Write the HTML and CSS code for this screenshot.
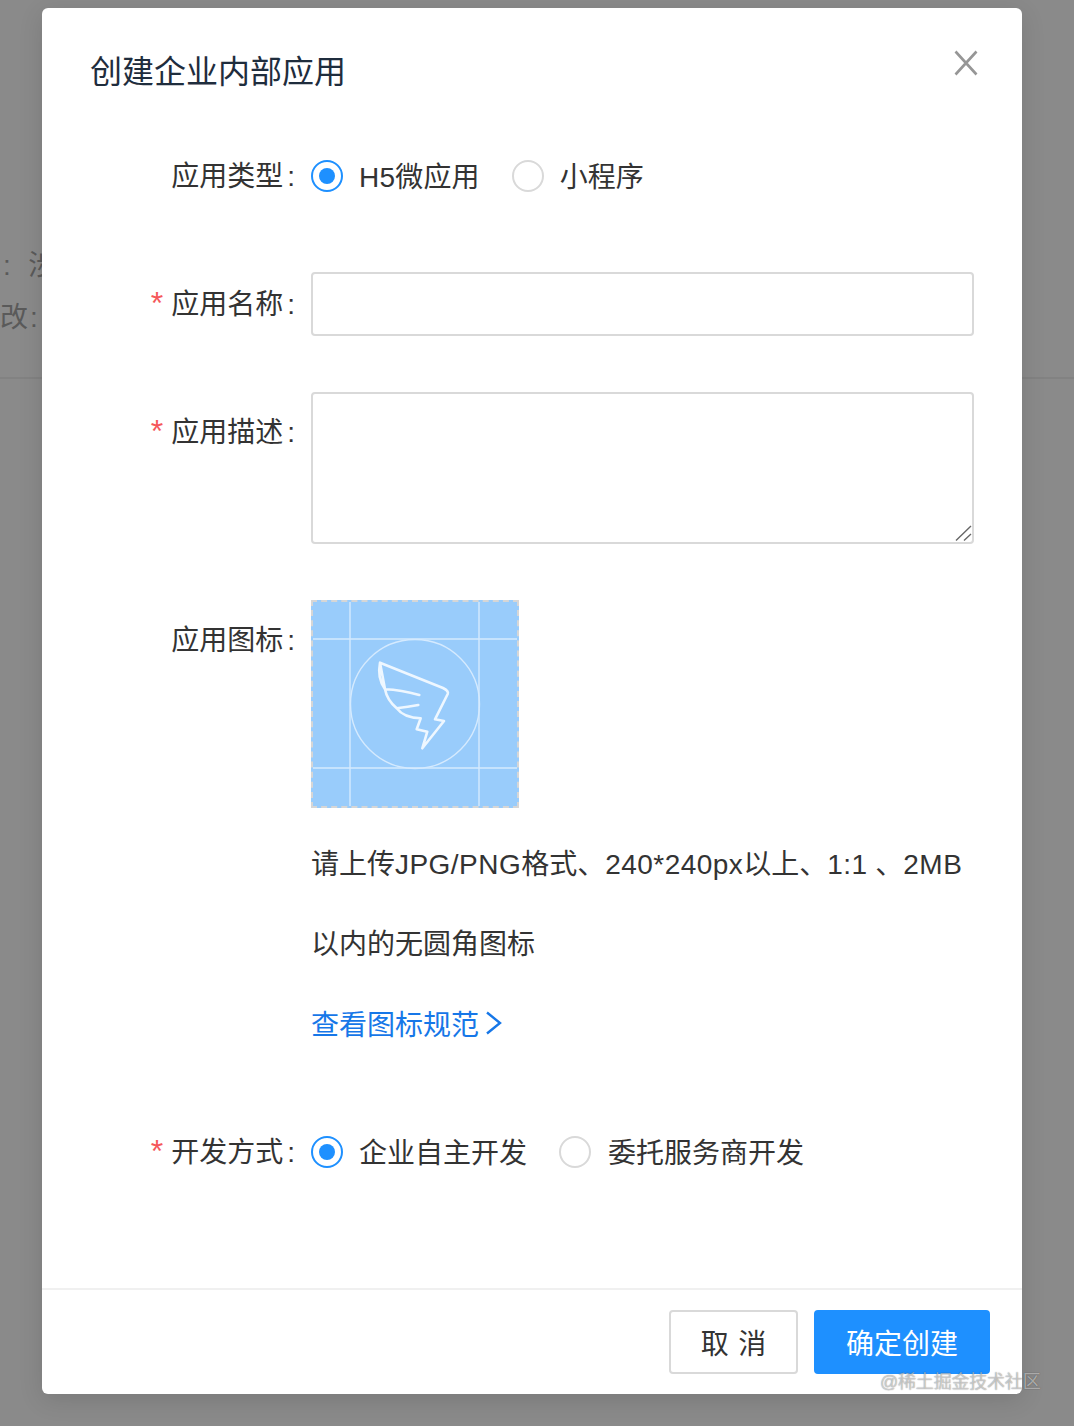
FILE: index.html
```html
<!DOCTYPE html>
<html lang="zh-CN">
<head>
<meta charset="utf-8">
<title>创建企业内部应用</title>
<link rel="stylesheet" href="styles.css">
</head>
<body>
<div class="behind">
  <span class="behind-a">:&nbsp;&nbsp;涉</span>
  <span class="behind-b">改:</span>
  <div class="behind-line"></div>
</div>
<section class="modal">
  <header class="modal-header">
    <h1 class="modal-title">创建企业内部应用</h1>
    <svg class="close" width="24" height="26" viewBox="0 0 24 26" aria-label="关闭"><path d="M1.5 1.5 22.5 24.5M22.5 1.5 1.5 24.5"/></svg>
  </header>
  <form class="modal-body">
    <div class="row">
      <div class="label">应用类型<span class="colon">:</span></div>
      <div class="control radios">
        <span class="radio on"></span><span class="radio-text gap-a">H5微应用</span>
        <span class="radio"></span><span class="radio-text">小程序</span>
      </div>
    </div>
    <div class="row">
      <div class="label"><span class="star">*</span>应用名称<span class="colon">:</span></div>
      <div class="control centered"><input class="field input" type="text"></div>
    </div>
    <div class="row">
      <div class="label"><span class="star">*</span>应用描述<span class="colon">:</span></div>
      <div class="control">
        <div class="area-wrap">
          <textarea class="field area"></textarea>
          <svg class="grip" width="18" height="18" viewBox="0 0 18 18"><path d="M1 16.5 16 2M9 16.5 16 10"/></svg>
        </div>
      </div>
    </div>
    <div class="row">
      <div class="label">应用图标<span class="colon">:</span></div>
      <div class="control">
        <div class="upload">
          <svg width="204" height="204" viewBox="2 2 204 204">
            <rect x="0" y="0" width="208" height="208" fill="#99ccfb"/>
            <g class="guides">
              <path d="M39 0V208M168 0V208M0 39H208M0 168H208"/>
              <circle cx="104" cy="104" r="64.5"/>
            </g>
            <path class="wing" d="M69 62.7 L132 88 Q138 91 136.7 94 L124 119.3 L133 121 L111.3 148.3 L116.3 131.7 L105.7 129.3 L109.7 118.3 Q93 118 85.7 108.3 Q97 107 107.3 105 M85.7 108.3 Q76 100 74 89.3 Q90 90 108.3 95 M74 89.3 Q66 78 69 62.7Z"/>
          </svg>
        </div>
        <p class="help">请上传<span class="latin">JPG/PNG</span>格式、<span class="latin">240*240px</span>以上、<span class="latin">1:1</span> 、<span class="latin">2MB</span>以内的无圆角图标</p>
        <a class="help-link" href="#">查看图标规范<svg width="17" height="24" viewBox="0 0 17 24"><path d="M2 1.5 15 12 2 22.5"/></svg></a>
      </div>
    </div>
    <div class="row">
      <div class="label"><span class="star">*</span>开发方式<span class="colon">:</span></div>
      <div class="control radios">
        <span class="radio on"></span><span class="radio-text gap-b">企业自主开发</span>
        <span class="radio"></span><span class="radio-text second">委托服务商开发</span>
      </div>
    </div>
  </form>
  <footer class="modal-footer">
    <button class="btn" type="button"><span class="spaced">取消</span></button>
    <button class="btn primary" type="button">确定创建</button>
  </footer>
</section>
<div class="watermark">@稀土掘金技术社区</div>
</body>
</html>
```
FILE: styles.css
```css
* { box-sizing: border-box; }
html, body { margin: 0; height: 1426px; overflow: hidden; }
body {
  position: relative;
  background: #8a8a8a;
  font-family: "Liberation Sans", "Noto Sans CJK SC", sans-serif;
  font-size: 28px;
  color: #333;
  padding: 8px 52px 32px 42px;
}
.behind { position: absolute; inset: 0; color: #5a5a5a; }
.behind-a { position: absolute; left: 3px; top: 246px; line-height: 40px; white-space: nowrap; word-spacing: 1px; }
.behind-b { position: absolute; left: 0; top: 298px; line-height: 40px; white-space: nowrap; letter-spacing: 2px; }
.behind-line { position: absolute; left: 0; right: 0; top: 377px; height: 2px; background: #828282; }

.modal {
  position: relative;
  width: 980px;
  height: 1386px;
  background: #fff;
  border-radius: 6px;
  display: flex;
  flex-direction: column;
  box-shadow: 0 6px 24px rgba(0, 0, 0, .12);
}
.modal-header { padding: 42px 48px 0; height: 128px; flex: none; }
.modal-title { margin: 0; font-size: 32px; line-height: 44px; font-weight: 400; color: #1f2d3d; }
.close { position: absolute; top: 42px; right: 44px; }
.close path { fill: none; stroke: #969696; stroke-width: 2.6; }

.modal-body { flex: 1; display: flex; flex-direction: column; gap: 48px; }
.row { display: flex; }
.label {
  width: 269px;
  height: 80px;
  flex: none;
  padding-top: 1px;
  padding-right: 16px;
  text-align: right;
  line-height: 80px;
  white-space: nowrap;
  color: #333;
}
.colon { margin-left: 4px; }
.star { color: #f5585a; margin-right: 8px; font-size: 32px; line-height: 0; }
.control { width: 663px; flex: none; }
.centered { display: flex; align-items: center; }
.radios { display: flex; align-items: center; height: 80px; }
.radio {
  width: 32px;
  height: 32px;
  flex: none;
  border-radius: 50%;
  border: 2px solid #d9d9d9;
  display: flex;
  align-items: center;
  justify-content: center;
}
.radio.on { border-color: #1e90ff; }
.radio.on::after { content: ""; width: 16px; height: 16px; border-radius: 50%; background: #1e90ff; }
.radio-text { margin-left: 16px; white-space: nowrap; margin-top: -2px; }
.gap-a { margin-right: 32px; letter-spacing: .2px; }
.gap-b { margin-right: 32px; }
.second { margin-left: 17px; }

.field {
  display: block;
  width: 663px;
  border: 2px solid #d9d9d9;
  border-radius: 4px;
  background: #fff;
  outline: none;
  font: inherit;
  margin: 0;
}
.input { height: 64px; }
.area-wrap { position: relative; height: 160px; }
.area { height: 152px; resize: none; }
.grip { position: absolute; right: 1px; top: 132px; pointer-events: none; }
.grip path { fill: none; stroke: #666; stroke-width: 1.4; }

.upload {
  width: 208px;
  height: 208px;
  border: 2px dashed #d6d6d6;
  background: #99ccfb;
  margin-bottom: 16px;
}
.upload svg { display: block; }
.guides path, .guides circle { fill: none; stroke: #d5eafe; stroke-width: 1.4; }
.wing { fill: none; stroke: #eef7ff; stroke-width: 2.6; stroke-linejoin: round; stroke-linecap: round; }
.help { margin: 0 0 -2px; padding-top: 1px; line-height: 80px; width: 662px; color: #333; }
.latin { letter-spacing: .46px; }
.help-link {
  display: flex;
  align-items: center;
  height: 80px;
  margin-bottom: 1px;
  color: #1677e8;
  text-decoration: none;
}
.help-link svg { margin-left: 6px; }
.help-link path { fill: none; stroke: #1677e8; stroke-width: 2.4; }

.modal-footer {
  flex: none;
  display: flex;
  justify-content: flex-end;
  gap: 16px;
  padding: 20px 32px;
  border-top: 2px solid #f0f0f0;
}
.btn {
  height: 64px;
  width: 129px;
  border: 2px solid #d9d9d9;
  border-radius: 4px;
  background: #fff;
  color: #333;
  font: inherit;
  padding: 0;
}
.spaced { letter-spacing: .34em; margin-right: -.34em; }
.primary { width: 176px; background: #1e90ff; border-color: #1e90ff; color: #fff; }

.watermark {
  position: absolute;
  left: 880px;
  top: 1370px;
  font-size: 18px;
  line-height: 24px;
  letter-spacing: -.2px;
  white-space: nowrap;
  color: rgba(255, 255, 255, .55);
  text-shadow: 0 0 1px rgba(0, 0, 0, .55);
}
```
